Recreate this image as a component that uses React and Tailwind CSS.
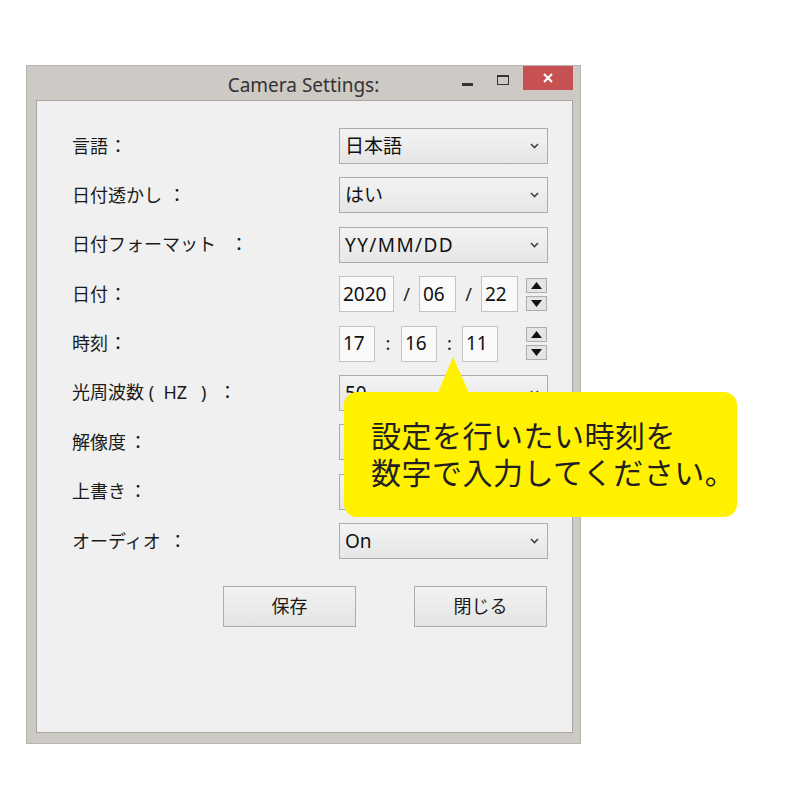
import React from 'react';

// [label, extra space before the colon]
const labels = [
  ['言語', 'ml-[1px]'],
  ['日付透かし', 'ml-[6px]'],
  ['日付フォーマット', 'ml-[14px]'],
  ['日付', 'ml-[1px]'],
  ['時刻', 'ml-[1px]'],
  ['光周波数 (  HZ   )', 'ml-[12px]'],
  ['解像度', 'ml-[3px]'],
  ['上書き', 'ml-[3px]'],
  ['オーディオ', 'ml-[8px]'],
];

function Chevron() {
  return (
    <svg width="9" height="6" viewBox="0 0 9 6" className="shrink-0">
      <path d="M1 1 L4.5 4.5 L8 1" fill="none" stroke="#444" strokeWidth="1.6" />
    </svg>
  );
}

function Select({ value, latin }) {
  return (
    <div className="w-[209px] h-[36px] border border-[#acacac] bg-gradient-to-b from-[#f3f3f3] to-[#e6e6e6] flex items-center justify-between pl-[5px] pr-[8px] text-[19px] text-[#111]">
      <span className={latin ? 'tracking-[1.4px]' : ''}>{value}</span>
      <Chevron />
    </div>
  );
}

function Box({ value, w }) {
  return (
    <div className={`${w} h-[36px] border border-[#c4c4c4] bg-[#fafafa] flex items-center pl-[3px] text-[19px] text-[#111]`}>
      {value}
    </div>
  );
}

function Sep({ ch, w }) {
  return <div className={`${w} text-center text-[18px] text-[#222]`}>{ch}</div>;
}

function Spinner() {
  return (
    <div className="flex flex-col gap-[3px] w-[21px]">
      <div className="h-[15px] border border-[#adadad] bg-[#e4e4e4] flex items-center justify-center">
        <svg width="11" height="7" viewBox="0 0 11 7"><path d="M5.5 0 L11 7 L0 7 Z" fill="#111" /></svg>
      </div>
      <div className="h-[15px] border border-[#adadad] bg-[#e4e4e4] flex items-center justify-center">
        <svg width="11" height="7" viewBox="0 0 11 7"><path d="M0 0 L11 0 L5.5 7 Z" fill="#111" /></svg>
      </div>
    </div>
  );
}

function Control({ index }) {
  switch (index) {
    case 0: return <Select value="日本語" />;
    case 1: return <Select value="はい" />;
    case 2: return <Select value="YY/MM/DD" latin />;
    case 3:
      return (
        <div className="flex items-center">
          <Box value="2020" w="w-[55px]" />
          <Sep ch="/" w="w-[25px]" />
          <Box value="06" w="w-[37px]" />
          <Sep ch="/" w="w-[25px]" />
          <Box value="22" w="w-[37px]" />
          <div className="ml-[8px]"><Spinner /></div>
        </div>
      );
    case 4:
      return (
        <div className="flex items-center">
          <Box value="17" w="w-[36px]" />
          <Sep ch=":" w="w-[26px]" />
          <Box value="16" w="w-[36px]" />
          <Sep ch=":" w="w-[25px]" />
          <Box value="11" w="w-[36px]" />
          <div className="ml-[28px]"><Spinner /></div>
        </div>
      );
    case 5: return <Select value="50" />;
    case 8: return <Select value="On" />;
    default: return <Select value="" />;
  }
}

export default function App() {
  return (
    <div className="relative w-[800px] h-[800px] bg-white font-['Noto_Sans','Noto_Sans_CJK_JP',sans-serif] pt-[65px] pl-[26px]">
      {/* window */}
      <div className="w-[555px] h-[679px] bg-[#cdc9c5] border border-[#b8b4b0] flex flex-col">
        <div className="h-[34px] grid grid-cols-[1fr_auto_1fr] items-start">
          <div />
          <div className="pt-[5px] text-[19px] text-[#333]">Camera Settings:</div>
          <div className="flex justify-end items-start pr-[7px]">
            <div className="w-[11px] h-[3px] bg-[#333] mt-[17px] mr-[24px]" />
            <div className="w-[12px] h-[10px] border border-[#333] border-t-[2px] mt-[9px] mr-[14px]" />
            <div className="w-[50px] h-[24px] bg-[#c75050] flex items-center justify-center">
              <svg width="10" height="10" viewBox="0 0 10 10">
                <path d="M1 1 L9 9 M9 1 L1 9" stroke="#fff" strokeWidth="2.2" />
              </svg>
            </div>
          </div>
        </div>
        <div className="ml-[9px] mr-[7px] h-[633px] bg-[#f0f0f0] border border-[#a9a6a3] pt-[27px] pl-[35px]">
          <div className="flex flex-col gap-[13.4px]">
            {labels.map(([name, gap], i) => (
              <div key={i} className="h-[36px] flex items-center">
                <div className="w-[267px] flex text-[18px] text-[#1a1a1a] whitespace-pre">
                  <span>{name}</span>
                  <span className={gap}>：</span>
                </div>
                <Control index={i} />
              </div>
            ))}
          </div>
          <div className="flex mt-[27px] pl-[151px] gap-[58px]">
            <button className="w-[133px] h-[41px] border border-[#adadad] bg-gradient-to-b from-[#f2f2f2] to-[#e4e4e4] text-[18px] text-[#1a1a1a]">保存</button>
            <button className="w-[133px] h-[41px] border border-[#adadad] bg-gradient-to-b from-[#f2f2f2] to-[#e4e4e4] text-[18px] text-[#1a1a1a]">閉じる</button>
          </div>
        </div>
      </div>

      {/* callout */}
      <svg className="absolute left-[437px] top-[357px]" width="33" height="38" viewBox="0 0 33 38">
        <path d="M16 0 L33 38 L0 38 Z" fill="#fff100" />
      </svg>
      <div className="absolute left-[344px] top-[392px] w-[393px] h-[125px] rounded-[13px] bg-[#fff100] pl-[27px] pt-[24px] text-[30px] leading-[37px] tracking-[0.5px] text-[#231f20] font-['Noto_Sans_CJK_JP',sans-serif]">
        <div>設定を行いたい時刻を</div>
        <div>数字で入力してください。</div>
      </div>
    </div>
  );
}
